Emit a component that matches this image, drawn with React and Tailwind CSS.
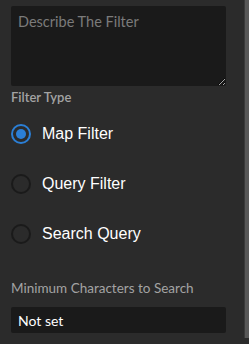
import { useState } from 'react';

const options = ['Map Filter', 'Query Filter', 'Search Query'];

const Radio = ({ checked }) => (
  <span
    className={`flex h-[20px] w-[20px] shrink-0 items-center justify-center rounded-full border-2 ${
      checked ? 'border-[#2b7fd6]' : 'border-[#1a1a1a]'
    }`}
  >
    {checked && <span className="h-[10px] w-[10px] rounded-full bg-[#2b7fd6]" />}
  </span>
);

const App = () => {
  const [type, setType] = useState('Map Filter');

  return (
    <div className="flex h-[344px] w-[249px] overflow-hidden bg-[#2b2b2b] font-['Lato',sans-serif]">
      <div className="flex-1 pl-[11px] pr-[18px] pt-[6px]">
        <textarea
          placeholder="Describe The Filter"
          className="block h-[80px] w-full resize-y rounded-[2px] bg-[#1a1a1a] px-[7px] py-[5px] text-[14.5px] text-white outline-none placeholder:text-[#7b7b7b]"
        />
        <div className="mt-[3px] text-[13px] font-semibold leading-[16px] text-[#a3a3a3]">Filter Type</div>

        <div className="mt-[4px] flex flex-col">
          {options.map((opt) => (
            <button
              key={opt}
              onClick={() => setType(opt)}
              className="flex h-[50px] items-center gap-[11px] text-left font-['Liberation_Sans',Arial,sans-serif] text-[16px] text-white"
            >
              <Radio checked={type === opt} />
              <span>{opt}</span>
            </button>
          ))}
        </div>

        <div className="mt-[21px] text-[13.5px] leading-[16px] text-[#a3a3a3]">Minimum Characters to Search</div>
        <div className="mt-[11px] flex h-[26px] items-center rounded-[2px] bg-[#1a1a1a] px-[7px] text-[14px] text-white">
          Not set
        </div>
      </div>

      {/* scrollbar */}
      <div className="flex w-[5px] flex-col">
        <div className="flex-1 border-l border-[#3a3a3a] bg-[#585858]" />
        <div className="h-[6px] bg-[#2b2b2b]" />
      </div>
    </div>
  );
};

export default App;
